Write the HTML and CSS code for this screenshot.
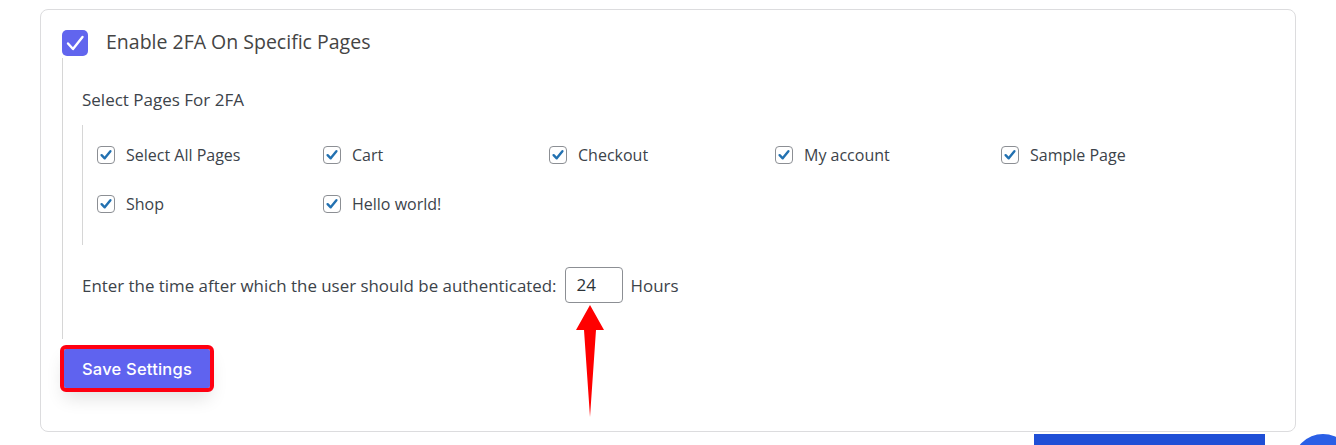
FILE: index.html
```html
<!DOCTYPE html>
<html>
<head>
<meta charset="utf-8">
<link rel="stylesheet" href="styles.css">
</head>
<body>
<div class="card">
  <div class="head">
    <span class="bigcheck">
      <svg width="26" height="26" viewBox="0 0 26 26"><path d="M6 13.5 L11 19 L20.5 7" fill="none" stroke="#fff" stroke-width="2.4" stroke-linecap="round" stroke-linejoin="round"/></svg>
    </span>
    <span class="title">Enable 2FA On Specific Pages</span>
  </div>
  <div class="section">
    <div class="subtitle">Select Pages For 2FA</div>
    <div class="pages">
      <label class="page"><span class="cb"><svg width="16" height="16" viewBox="0 0 16 16"><path d="M3.6 8.2 L6.7 11.3 L12.4 4.3" fill="none" stroke="#2271b1" stroke-width="2.4" stroke-linecap="round" stroke-linejoin="round"/></svg></span>Select All Pages</label>
      <label class="page"><span class="cb"><svg width="16" height="16" viewBox="0 0 16 16"><path d="M3.6 8.2 L6.7 11.3 L12.4 4.3" fill="none" stroke="#2271b1" stroke-width="2.4" stroke-linecap="round" stroke-linejoin="round"/></svg></span>Cart</label>
      <label class="page"><span class="cb"><svg width="16" height="16" viewBox="0 0 16 16"><path d="M3.6 8.2 L6.7 11.3 L12.4 4.3" fill="none" stroke="#2271b1" stroke-width="2.4" stroke-linecap="round" stroke-linejoin="round"/></svg></span>Checkout</label>
      <label class="page"><span class="cb"><svg width="16" height="16" viewBox="0 0 16 16"><path d="M3.6 8.2 L6.7 11.3 L12.4 4.3" fill="none" stroke="#2271b1" stroke-width="2.4" stroke-linecap="round" stroke-linejoin="round"/></svg></span>My account</label>
      <label class="page"><span class="cb"><svg width="16" height="16" viewBox="0 0 16 16"><path d="M3.6 8.2 L6.7 11.3 L12.4 4.3" fill="none" stroke="#2271b1" stroke-width="2.4" stroke-linecap="round" stroke-linejoin="round"/></svg></span>Sample Page</label>
      <label class="page"><span class="cb"><svg width="16" height="16" viewBox="0 0 16 16"><path d="M3.6 8.2 L6.7 11.3 L12.4 4.3" fill="none" stroke="#2271b1" stroke-width="2.4" stroke-linecap="round" stroke-linejoin="round"/></svg></span>Shop</label>
      <label class="page"><span class="cb"><svg width="16" height="16" viewBox="0 0 16 16"><path d="M3.6 8.2 L6.7 11.3 L12.4 4.3" fill="none" stroke="#2271b1" stroke-width="2.4" stroke-linecap="round" stroke-linejoin="round"/></svg></span>Hello world!</label>
    </div>
    <div class="timerow">
      <span>Enter the time after which the user should be authenticated:</span>
      <span class="input-wrap">
        <span class="input">24</span>
        <svg class="arrow" width="40" height="116" viewBox="0 0 40 116"><path d="M20 0 L34 25 L26 25 L20 112 L14 25 L6 25 Z" fill="#ff0000"/></svg>
      </span>
      <span>Hours</span>
    </div>
  </div>
  <button class="save">Save Settings</button>
</div>
<div class="bottom">
  <div class="bluebar"></div>
  <div class="bluecircle"></div>
</div>
</body>
</html>
```
FILE: styles.css
```css
html, body {
  margin: 0;
  padding: 0;
  background: #fff;
  overflow: hidden;
  height: 445px;
  font-family: "Open Sans", "Noto Sans", sans-serif;
  color: #3c434a;
}
.card {
  margin: 9px 0 0 40px;
  width: 1254px;
  height: 421px;
  border: 1px solid #dcdcde;
  border-radius: 8px;
  box-sizing: content-box;
  padding: 0;
  position: relative;
}
.head {
  display: flex;
  align-items: center;
  padding: 20px 0 0 21px;
  height: 26px;
}
.bigcheck {
  width: 26px;
  height: 26px;
  border-radius: 5px;
  background: #6165ee;
  display: flex;
}
.title {
  margin-left: 18px;
  font-size: 19.5px;
  font-weight: 500;
  color: #444;
  position: relative;
  top: -2px;
}
.section {
  margin: 2px 0 0 21px;
  border-left: 1px solid #d6d6d6;
  padding: 31px 0 0 19px;
  height: 250px;
}
.subtitle {
  font-size: 17px;
  color: #3c434a;
  line-height: 22px;
}
.pages {
  margin-top: 14px;
  border-left: 1px solid #d6d6d6;
  padding: 19px 0 0 14px;
  height: 101px;
  display: grid;
  grid-template-columns: repeat(5, 226px);
  grid-auto-rows: 49px;
  align-content: start;
}
.page {
  display: flex;
  align-items: center;
  height: 22px;
  font-size: 16px;
  color: #3c434a;
}
.cb {
  width: 16px;
  height: 16px;
  border: 1px solid #8c8f94;
  border-radius: 4px;
  display: flex;
  margin-right: 11px;
  background: #fff;
}
.timerow {
  margin-top: 22px;
  display: flex;
  align-items: center;
  font-size: 16.9px;
  color: #3c434a;
}
.input-wrap {
  position: relative;
  margin: 0 8px 0 8px;
}
.input {
  display: block;
  width: 45px;
  height: 34px;
  border: 1px solid #8c8f94;
  border-radius: 4px;
  padding-left: 11px;
  line-height: 34px;
  font-size: 17px;
  font-weight: 500;
  color: #2c3338;
}
.arrow {
  position: absolute;
  left: 5px;
  top: 38px;
}
.save {
  margin: 10px 0 0 23px;
  width: 146px;
  height: 39px;
  background: #5f63ef;
  color: #fff;
  border: none;
  border-radius: 2px;
  outline: 4px solid #ff0011;
  outline-offset: 0;
  font-family: "Inter", "Lato", sans-serif;
  font-size: 16.5px;
  font-weight: 500;
  letter-spacing: 0.2px;
  box-shadow: 0 10px 18px rgba(0,0,0,0.12);
  padding: 0;
}
.bottom {
  position: relative;
  height: 14px;
  border-bottom: 1px solid #e4e4e4;
  box-sizing: border-box;
  margin-top: 1px;
  overflow: hidden;
}
.bluebar {
  position: absolute;
  left: 1034px;
  top: 1px;
  width: 231px;
  height: 20px;
  background: #1f4fd6;
}
.bluecircle {
  position: absolute;
  left: 1293px;
  top: 1px;
  width: 60px;
  height: 60px;
  border-radius: 50%;
  background: #2a5fe6;
}
```
